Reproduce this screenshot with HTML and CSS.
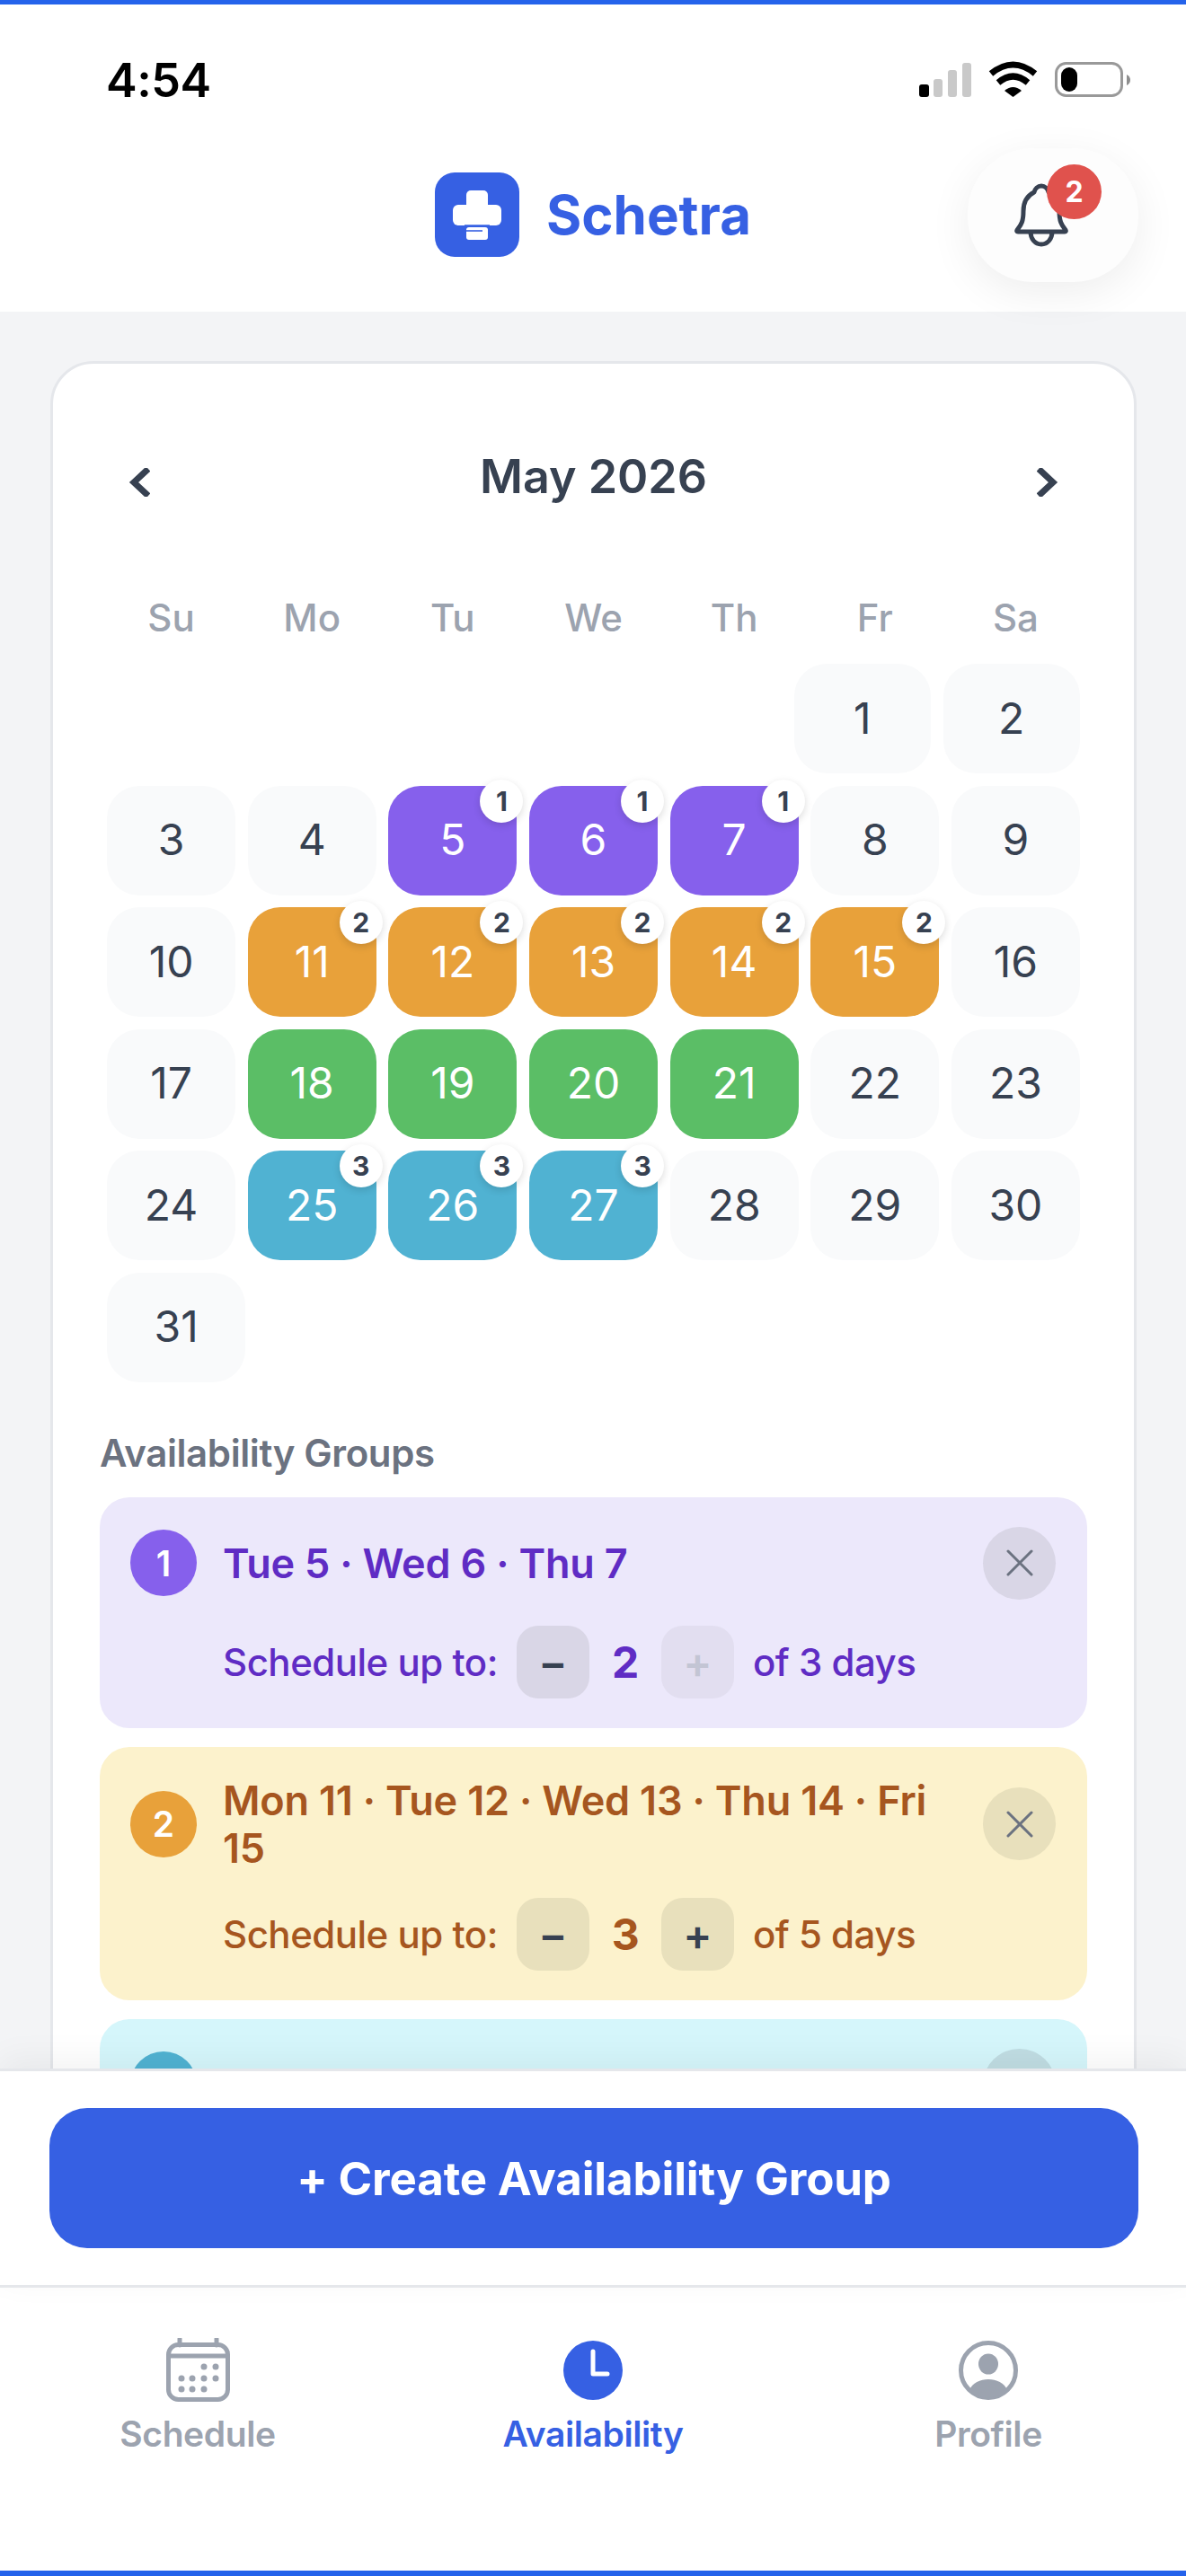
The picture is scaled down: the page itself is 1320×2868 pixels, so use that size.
FILE: index.html
```html
<!DOCTYPE html>
<html lang="en">
<head>
    <meta charset="UTF-8">
    <meta name="viewport" content="width=device-width, initial-scale=1.0">
    <title>Schetra - Availability</title>
    <link rel="stylesheet" href="styles.css">
</head>
<body>
    <div class="page">
        <div class="top-area">
            <div class="status-bar">
                <span class="time">4:54</span>
                <div class="status-icons">
                    <svg width="58" height="38" viewBox="0 0 58 38">
                        <rect x="0" y="24" width="11" height="14" rx="3" fill="#000"/>
                        <rect x="16" y="18" width="10" height="20" rx="3" fill="#c9c9c9"/>
                        <rect x="32" y="8" width="10" height="30" rx="3" fill="#c9c9c9"/>
                        <rect x="48" y="0" width="10" height="38" rx="3" fill="#c9c9c9"/>
                    </svg>
                    <svg width="55" height="40" viewBox="0 0 55 40">
                        <path d="M3 14 Q27.5 -6 52 14" fill="none" stroke="#000" stroke-width="7"/>
                        <path d="M11 24 Q27.5 10 44 24" fill="none" stroke="#000" stroke-width="7"/>
                        <path d="M18 33 Q27.5 25 37 33 L27.5 40 Z" fill="#000"/>
                    </svg>
                    <svg width="84" height="39" viewBox="0 0 84 39">
                        <rect x="1.5" y="1.5" width="73" height="36" rx="11" fill="#fff" stroke="#999" stroke-width="3"/>
                        <rect x="7" y="6" width="18" height="27" rx="9" fill="#000"/>
                        <path d="M80 14 Q84 16 84 20 Q84 24 80 26 Z" fill="#8e8e8e"/>
                    </svg>
                </div>
            </div>
            <header class="app-header">
                <div class="logo">
                    <svg class="logo-mark" width="94" height="94" viewBox="0 0 94 94">
                        <rect width="94" height="94" rx="22" fill="#3660e3"/>
                        <rect x="35" y="20" width="24" height="22" rx="5" fill="#fff"/>
                        <rect x="20" y="36" width="54" height="23" rx="6" fill="#fff"/>
                        <rect x="35" y="61" width="24" height="14" rx="3" fill="#fff"/>
                        <path d="M33 59.5 H61" stroke="#3660e3" stroke-width="2.5"/>
                        <path d="M35 65 H53" stroke="#3660e3" stroke-width="1.6"/>
                    </svg>
                    <span class="logo-text">Schetra</span>
                </div>
                <button class="bell-btn">
                    <svg width="60" height="71" viewBox="0 0 60 71" fill="none" stroke="#374151" stroke-width="5" stroke-linejoin="round">
                        <path d="M30 3 C34 3 37 6 38 10 C46 14 50 22 50 31 C50 42 52 46 57 52 Q58 54 56 54 L4 54 Q2 54 3 52 C8 46 10 42 10 31 C10 22 14 14 22 10 C23 6 26 3 30 3 Z"/>
                        <path d="M18 54 C18 62 23 68 30 68 C37 68 42 62 42 54"/>
                    </svg>
                    <span class="bell-badge">2</span>
                </button>
            </header>
        </div>

        <main class="content">
            <section class="card">
                <div class="cal-head">
                    <svg class="cal-arrow" width="24" height="32" viewBox="0 0 24 32"><polyline points="22 1 6 16 22 31" fill="none" stroke="#374151" stroke-width="7"/></svg>
                    <h2 class="cal-title">May 2026</h2>
                    <svg class="cal-arrow" width="24" height="32" viewBox="0 0 24 32"><polyline points="2 1 18 16 2 31" fill="none" stroke="#374151" stroke-width="7"/></svg>
                </div>

                <div class="weekdays">
                    <span>Su</span><span>Mo</span><span>Tu</span><span>We</span><span>Th</span><span>Fr</span><span>Sa</span>
                </div>

                <div class="weeks">
                    <div class="week">
                        <div class="blank"></div><div class="blank"></div><div class="blank"></div><div class="blank"></div><div class="blank"></div>
                        <div class="day">1</div>
                        <div class="day">2</div>
                    </div>
                    <div class="week">
                        <div class="day">3</div>
                        <div class="day">4</div>
                        <div class="day purple">5<span class="count">1</span></div>
                        <div class="day purple">6<span class="count">1</span></div>
                        <div class="day purple">7<span class="count">1</span></div>
                        <div class="day">8</div>
                        <div class="day">9</div>
                    </div>
                    <div class="week">
                        <div class="day">10</div>
                        <div class="day orange">11<span class="count">2</span></div>
                        <div class="day orange">12<span class="count">2</span></div>
                        <div class="day orange">13<span class="count">2</span></div>
                        <div class="day orange">14<span class="count">2</span></div>
                        <div class="day orange">15<span class="count">2</span></div>
                        <div class="day">16</div>
                    </div>
                    <div class="week">
                        <div class="day">17</div>
                        <div class="day green">18</div>
                        <div class="day green">19</div>
                        <div class="day green">20</div>
                        <div class="day green">21</div>
                        <div class="day">22</div>
                        <div class="day">23</div>
                    </div>
                    <div class="week">
                        <div class="day">24</div>
                        <div class="day teal">25<span class="count">3</span></div>
                        <div class="day teal">26<span class="count">3</span></div>
                        <div class="day teal">27<span class="count">3</span></div>
                        <div class="day">28</div>
                        <div class="day">29</div>
                        <div class="day">30</div>
                    </div>
                    <div class="week">
                        <div class="day">31</div>
                        <div class="blank"></div><div class="blank"></div><div class="blank"></div><div class="blank"></div><div class="blank"></div><div class="blank"></div>
                    </div>
                </div>

                <h3 class="groups-title">Availability Groups</h3>

                <div class="group group-purple">
                    <div class="group-top">
                        <span class="group-num">1</span>
                        <span class="group-days">Tue 5 · Wed 6 · Thu 7</span>
                        <button class="group-close">
                            <svg width="30" height="30" viewBox="0 0 30 30"><path d="M2 2 L28 28 M28 2 L2 28" stroke="#6b7280" stroke-width="3" stroke-linecap="round"/></svg>
                        </button>
                    </div>
                    <div class="group-limit">
                        <span>Schedule up to:</span>
                        <button class="step">−</button>
                        <span class="step-value">2</span>
                        <button class="step disabled">+</button>
                        <span>of 3 days</span>
                    </div>
                </div>

                <div class="group group-orange">
                    <div class="group-top">
                        <span class="group-num">2</span>
                        <span class="group-days">Mon 11 · Tue 12 · Wed 13 · Thu 14 · Fri 15</span>
                        <button class="group-close">
                            <svg width="30" height="30" viewBox="0 0 30 30"><path d="M2 2 L28 28 M28 2 L2 28" stroke="#6b7280" stroke-width="3" stroke-linecap="round"/></svg>
                        </button>
                    </div>
                    <div class="group-limit">
                        <span>Schedule up to:</span>
                        <button class="step">−</button>
                        <span class="step-value">3</span>
                        <button class="step">+</button>
                        <span>of 5 days</span>
                    </div>
                </div>

                <!-- third group runs under the action bar, only its top shows -->
                <div class="group group-teal">
                    <div class="group-top">
                        <span class="group-num"></span>
                        <span class="group-days"></span>
                        <button class="group-close"></button>
                    </div>
                </div>
            </section>
        </main>

        <div class="action-bar">
            <button class="create-btn">+ Create Availability Group</button>
        </div>

        <nav class="tab-bar">
            <a class="tab">
                <span class="tab-icon">
                    <svg width="71" height="71" viewBox="0 0 71 71" fill="#9ca3af">
                        <rect x="2.5" y="7.5" width="66" height="61" rx="11" fill="none" stroke="#9ca3af" stroke-width="5"/>
                        <path d="M3 20 H68" stroke="#9ca3af" stroke-width="5"/>
                        <path d="M15 1 V8 M56 1 V8" stroke="#9ca3af" stroke-width="5" stroke-linecap="round"/>
                        <circle cx="42" cy="32" r="3.5"/><circle cx="55" cy="32" r="3.5"/>
                        <circle cx="17" cy="45" r="3.5"/><circle cx="29" cy="45" r="3.5"/><circle cx="42" cy="45" r="3.5"/><circle cx="55" cy="45" r="3.5"/>
                        <circle cx="17" cy="57" r="3.5"/><circle cx="29" cy="57" r="3.5"/><circle cx="42" cy="57" r="3.5"/>
                    </svg>
                </span>
                <span>Schedule</span>
            </a>
            <a class="tab active">
                <span class="tab-icon">
                    <svg width="66" height="66" viewBox="0 0 66 66">
                        <circle cx="33" cy="33" r="33" fill="#3660e3"/>
                        <path d="M33 12 V37 H49" fill="none" stroke="#fff" stroke-width="5" stroke-linecap="round" stroke-linejoin="round"/>
                    </svg>
                </span>
                <span>Availability</span>
            </a>
            <a class="tab">
                <span class="tab-icon">
                    <svg width="66" height="66" viewBox="0 0 66 66" fill="#9ca3af">
                        <circle cx="33" cy="33" r="30.5" fill="none" stroke="#9ca3af" stroke-width="5"/>
                        <ellipse cx="33" cy="26" rx="11" ry="11.5"/>
                        <path d="M12 55 C15 47 24 43 33 43 C42 43 51 47 54 55 A 30 30 0 0 1 12 55 Z"/>
                    </svg>
                </span>
                <span>Profile</span>
            </a>
        </nav>
    </div>
</body>
</html>
```

FILE: styles.css
```css
* {
    margin: 0;
    padding: 0;
    box-sizing: border-box;
}

body {
    font-family: 'Inter', 'Liberation Sans', sans-serif;
    background-color: #fff;
    color: #374151;
}

button {
    font-family: inherit;
    border: none;
    cursor: pointer;
}

.page {
    height: 2868px;
    display: flex;
    flex-direction: column;
    overflow: hidden;
    border-top: 5px solid #2563eb;
    border-bottom: 6px solid #2563eb;
}

/* Status bar + header */
.top-area {
    position: relative;
    z-index: 2;
    background: #fff;
}

.status-bar {
    height: 126px;
    padding: 63px 62px 0 118px;
    display: flex;
    justify-content: space-between;
    align-items: flex-start;
}

.time {
    font-size: 52px;
    font-weight: 600;
    line-height: 44px;
    letter-spacing: -0.5px;
    color: #000;
}

.status-icons {
    display: flex;
    align-items: flex-end;
    gap: 19px;
    height: 40px;
}

.app-header {
    height: 216px;
    display: grid;
    grid-template-columns: 1fr auto 1fr;
    align-items: center;
}

.logo {
    grid-column: 2;
    display: flex;
    align-items: center;
    gap: 30px;
}

.logo-mark {
    display: block;
}

.logo-text {
    font-size: 60px;
    font-weight: 700;
    color: #3660e3;
}

.bell-btn {
    grid-column: 3;
    justify-self: end;
    position: relative;
    width: 190px;
    height: 149px;
    margin-right: 53px;
    border-radius: 72px;
    background: #fdfdfd;
    box-shadow: 0 12px 48px rgba(0, 0, 0, 0.07);
    display: flex;
    align-items: center;
    justify-content: center;
    padding: 0 26px 0 0;
}

.bell-badge {
    position: absolute;
    top: 18px;
    left: 88px;
    width: 61px;
    height: 61px;
    border-radius: 50%;
    background: #e0524d;
    color: #fff;
    font-size: 32px;
    font-weight: 700;
    display: flex;
    align-items: center;
    justify-content: center;
}

/* Calendar card */
.content {
    flex: 1;
    min-height: 0;
    overflow: hidden;
    background: #f3f4f6;
    padding: 55px 55px 0 56px;
}

.card {
    background: #fff;
    border: 3px solid #e5e7eb;
    border-radius: 48px;
    padding: 53px 52px;
}

.cal-head {
    height: 144px;
    padding: 0 32px;
    display: flex;
    align-items: center;
    justify-content: space-between;
}

.cal-arrow {
    margin-top: 14px;
}

.cal-title {
    font-size: 52px;
    font-weight: 600;
    color: #374151;
}

.weekdays {
    margin-top: 62px;
    padding: 0 8px;
    height: 48px;
    display: flex;
    gap: 13.5px;
}

.weekdays span {
    flex: 1 1 0;
    text-align: center;
    font-size: 42px;
    font-weight: 500;
    line-height: 48px;
    color: #9ca3af;
}

.weeks {
    margin-top: 27px;
    padding: 0 8px;
    display: flex;
    flex-direction: column;
    gap: 13.5px;
}

.week {
    display: flex;
    gap: 13.5px;
    height: 122px;
}

.blank {
    flex: 1 1 0;
}

.day {
    flex: 1 1 13px;
    position: relative;
    background: #f9fafb;
    border-radius: 36px;
    font-size: 48px;
    padding-bottom: 2px;
    display: flex;
    align-items: center;
    justify-content: center;
    color: #374151;
}

.day.purple {
    background: #8660ec;
    color: #fff;
}

.day.orange {
    background: #e8a13a;
    color: #fff;
}

.day.green {
    background: #5bbe66;
    color: #fff;
}

.day.teal {
    background: #50b2d2;
    color: #fff;
}

.count {
    position: absolute;
    top: -7px;
    right: -7px;
    width: 48px;
    height: 48px;
    border-radius: 50%;
    background: #fff;
    color: #374151;
    font-size: 30px;
    font-weight: 700;
    display: flex;
    align-items: center;
    justify-content: center;
    box-shadow: 0 3px 9px rgba(0, 0, 0, 0.14);
}

/* Availability groups */
.groups-title {
    margin-top: 53px;
    margin-bottom: 24px;
    font-size: 42px;
    line-height: 51px;
    font-weight: 600;
    letter-spacing: -0.4px;
    color: #6b7280;
}

.group {
    border-radius: 33px;
    padding: 33px 35px 33px 34px;
    margin-bottom: 21px;
}

.group-top {
    display: flex;
    align-items: center;
    gap: 29px;
}

.group-num {
    flex: none;
    width: 74px;
    height: 74px;
    border-radius: 50%;
    color: #fff;
    font-size: 39px;
    font-weight: 600;
    display: flex;
    align-items: center;
    justify-content: center;
}

.group-days {
    flex: 1;
    font-size: 45px;
    font-weight: 600;
    line-height: 53px;
    letter-spacing: -0.2px;
}

.group-close {
    flex: none;
    width: 81px;
    height: 81px;
    border-radius: 50%;
    display: flex;
    align-items: center;
    justify-content: center;
}

.group-limit {
    margin-top: 29px;
    margin-left: 103px;
    display: flex;
    align-items: center;
    gap: 21px;
    font-size: 42px;
    font-weight: 500;
    letter-spacing: -0.5px;
}

.step {
    width: 81px;
    height: 81px;
    border-radius: 24px;
    font-size: 48px;
    font-weight: 600;
    color: #374151;
}

.step.disabled {
    opacity: 0.5;
    color: #9ca3af;
}

.step-value {
    width: 38px;
    text-align: center;
    font-size: 48px;
    font-weight: 700;
}

.group-purple {
    background: #ece8fb;
    color: #5f2cc4;
}

.group-purple .group-num {
    background: #8660ec;
}

.group-purple .group-close,
.group-purple .step {
    background: #d9d6e6;
}

.group-orange {
    background: #fcf2cc;
    color: #a6561f;
}

.group-orange .group-num {
    background: #e8a13a;
}

.group-orange .group-close,
.group-orange .step {
    background: #e8e0bc;
}

.group-teal {
    background: #d5f6fb;
}

.group-teal .group-num {
    background: #50b2d2;
}

.group-teal .group-close {
    background: #c0dde3;
}

/* Bottom */
.action-bar {
    position: relative;
    z-index: 2;
    background: #fff;
    border-top: 3px solid #e5e7eb;
    border-bottom: 3px solid #e5e7eb;
    padding: 41px 53px 41px 55px;
    box-shadow: 0 -10px 36px rgba(0, 0, 0, 0.05);
}

.create-btn {
    display: block;
    width: 100%;
    height: 156px;
    border-radius: 42px;
    background: #3660e3;
    color: #fff;
    font-size: 51px;
    font-weight: 700;
    letter-spacing: -0.15px;
}

.tab-bar {
    height: 315px;
    background: #fff;
    display: grid;
    grid-template-columns: repeat(3, 1fr);
    padding-top: 56px;
}

.tab {
    display: flex;
    flex-direction: column;
    align-items: center;
    gap: 12px;
    font-size: 39px;
    font-weight: 600;
    line-height: 47px;
    letter-spacing: -0.4px;
    color: #9ca3af;
}

.tab.active {
    color: #3660e3;
}

.tab-icon {
    height: 71px;
    display: flex;
    align-items: center;
    justify-content: center;
}
```
